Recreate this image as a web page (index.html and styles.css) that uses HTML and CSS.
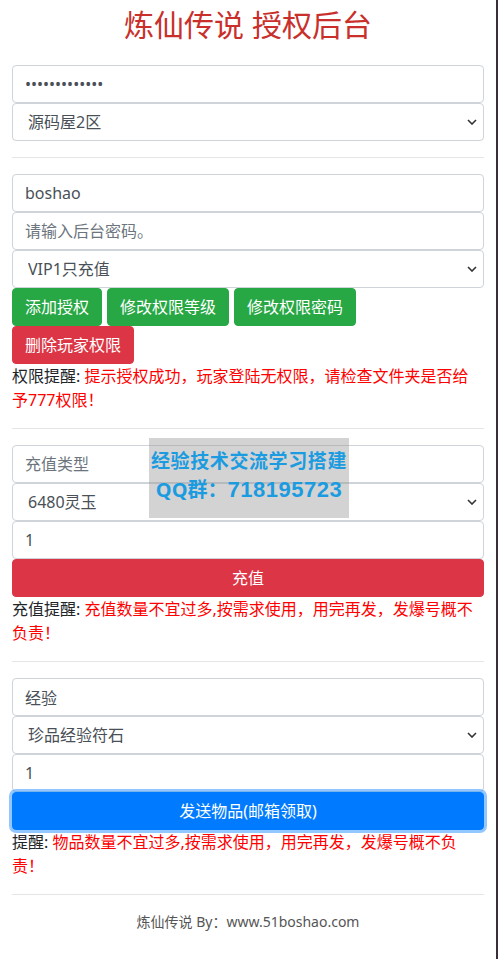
FILE: index.html
```html
<!DOCTYPE html>
<html lang="zh-CN">
<head>
    <meta charset="UTF-8">
    <meta name="viewport" content="width=device-width, initial-scale=1.0">
    <title>炼仙传说 授权后台</title>
    <link rel="stylesheet" href="styles.css">
</head>
<body>
    <div class="container">
        <h2 class="title">炼仙传说 授权后台</h2>

        <div class="group">
            <input type="password" class="form-control" value="1234567890123">
            <select class="form-control">
                <option>源码屋2区</option>
            </select>
        </div>

        <hr>

        <div class="group">
            <input type="text" class="form-control" value="boshao">
            <input type="password" class="form-control" placeholder="请输入后台密码。">
            <select class="form-control">
                <option>VIP1只充值</option>
            </select>
            <div class="btn-row">
                <button class="btn btn-success">添加授权</button>
                <button class="btn btn-success">修改权限等级</button>
                <button class="btn btn-success">修改权限密码</button>
            </div>
            <div class="btn-row">
                <button class="btn btn-danger">删除玩家权限</button>
            </div>
            <p class="tip">权限提醒: <span class="tip-red">提示授权成功，玩家登陆无权限，请检查文件夹是否给予777权限！</span></p>
        </div>

        <hr>

        <div class="group watermark-wrap">
            <input type="text" class="form-control" placeholder="充值类型">
            <select class="form-control">
                <option>6480灵玉</option>
            </select>
            <input type="text" class="form-control" value="1">
            <button class="btn btn-danger btn-block">充值</button>
            <p class="tip">充值提醒: <span class="tip-red">充值数量不宜过多,按需求使用，用完再发，发爆号概不负责！</span></p>

            <div class="watermark">
                <div class="wm-line1">经验技术交流学习搭建</div>
                <div class="wm-line2">QQ群：<b>718195723</b></div>
            </div>
        </div>

        <hr>

        <div class="group">
            <input type="text" class="form-control" value="经验">
            <select class="form-control">
                <option>珍品经验符石</option>
            </select>
            <input type="text" class="form-control" value="1">
            <button class="btn btn-primary btn-block focus">发送物品(邮箱领取)</button>
            <p class="tip">提醒: <span class="tip-red">物品数量不宜过多,按需求使用，用完再发，发爆号概不负责！</span></p>
        </div>

        <hr>

        <footer class="footer">炼仙传说 By：www.51boshao.com</footer>
    </div>
</body>
</html>
```

FILE: styles.css
```css
* {
    box-sizing: border-box;
}

body {
    font-family: "Noto Sans", "Noto Sans CJK SC", sans-serif;
    margin: 0;
    padding: 0;
    background-color: #fff;
    color: #212529;
    font-size: 16px;
    line-height: 1.5;
    border-right: 2px solid #3a2f38;
    min-height: 959px;
}

.container {
    padding: 0 12px 0 12px;
}

.title {
    margin: 7px 0 22px;
    font-size: 30px;
    font-weight: normal;
    line-height: 36px;
    text-align: center;
    color: #c9302c;
}

.form-control {
    display: block;
    width: 100%;
    height: 38px;
    padding: 6px 12px;
    font-family: inherit;
    font-size: 16px;
    line-height: 24px;
    color: #495057;
    background-color: #fff;
    border: 1px solid #ced4da;
    border-radius: 4px;
    margin: 0;
}

.form-control::placeholder {
    color: #6c757d;
}

select.form-control {
    -webkit-appearance: none;
    appearance: none;
    padding-left: 15px;
    background-image: url("data:image/svg+xml,%3Csvg xmlns='http://www.w3.org/2000/svg' width='10' height='6' viewBox='0 0 10 6'%3E%3Cpath d='M1 1l4 4 4-4' fill='none' stroke='%23333' stroke-width='1.6'/%3E%3C/svg%3E");
    background-repeat: no-repeat;
    background-position: right 6px center;
    background-size: 10px 6px;
}

hr {
    margin: 16px 0;
    border: 0;
    border-top: 1px solid rgba(0, 0, 0, 0.1);
}

.btn-row {
    display: flex;
    gap: 5px;
}

.btn {
    display: inline-block;
    height: 38px;
    padding: 6px 12px;
    font-family: inherit;
    font-size: 16px;
    line-height: 24px;
    color: #fff;
    border: 1px solid transparent;
    border-radius: 4px;
    cursor: pointer;
}

.btn-success {
    background-color: #28a745;
    border-color: #28a745;
}

.btn-danger {
    background-color: #dc3545;
    border-color: #dc3545;
}

.btn-primary {
    background-color: #007bff;
    border-color: #007bff;
}

.btn-primary.focus {
    box-shadow: 0 0 0 3px rgba(38, 143, 255, 0.5);
}

.btn-block {
    display: block;
    width: 100%;
}

.tip {
    margin: 0;
    line-height: 24px;
}

.tip-red {
    color: #f00;
}

.watermark-wrap {
    position: relative;
}

.watermark {
    position: absolute;
    left: 137px;
    top: -7px;
    width: 200px;
    height: 80px;
    background-color: rgba(150, 150, 150, 0.42);
    color: #1b9be0;
    text-align: center;
    font-weight: bold;
}

.wm-line1 {
    margin-top: 10px;
    font-size: 19px;
    line-height: 26px;
    letter-spacing: 0.6px;
}

.wm-line2 {
    font-size: 20px;
    line-height: 32px;
}

.wm-line2 b {
    font-family: "Liberation Sans", Arial, sans-serif;
    font-size: 22px;
    letter-spacing: 0.5px;
}

.footer {
    margin-top: 14px;
    text-align: center;
    font-size: 14px;
    line-height: 21px;
    color: #555;
}
```
